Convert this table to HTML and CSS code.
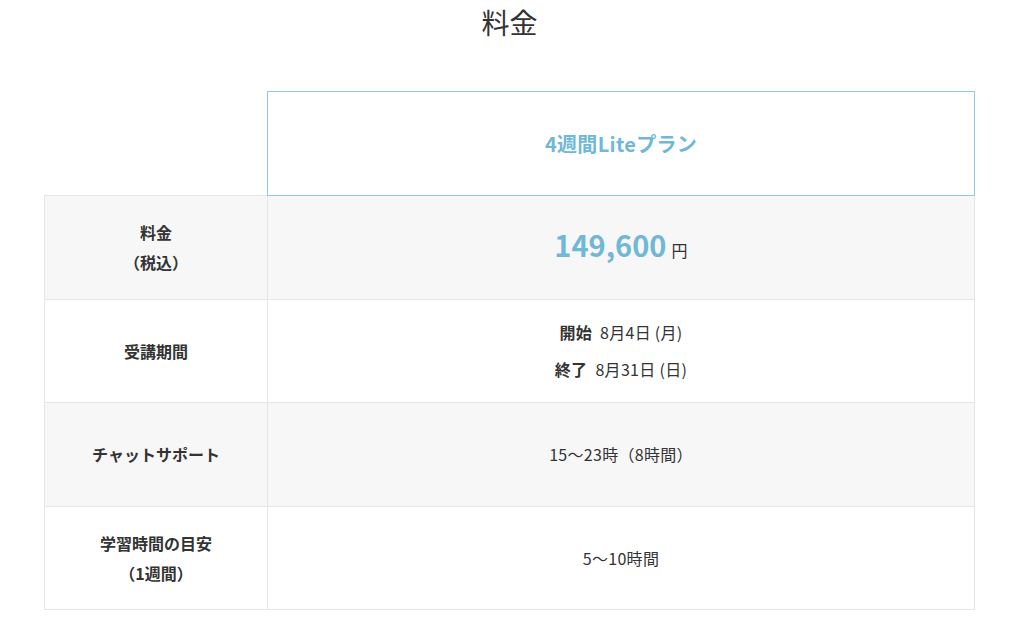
FILE: index.html
```html
<!DOCTYPE html>
<html lang="ja">
<head>
	<meta charset="UTF-8">
	<title>料金</title>
	<link rel="stylesheet" href="styles.css">
</head>
<body>
<div class="price">
	<h2 class="price-title">料金</h2>
	<table class="price-table">
		<colgroup>
			<col class="col-label">
			<col class="col-value">
		</colgroup>
		<tr class="head">
			<th class="blank"></th>
			<th class="plan">4週間Liteプラン</th>
		</tr>
		<tr class="gray">
			<th>料金<br>（税込）</th>
			<td><span class="amount">149,600</span><span class="yen">円</span></td>
		</tr>
		<tr>
			<th>受講期間</th>
			<td>
				<p class="period"><b>開始</b>8月4日 (月)</p>
				<p class="period"><b>終了</b>8月31日 (日)</p>
			</td>
		</tr>
		<tr class="gray">
			<th>チャットサポート</th>
			<td>15〜23時（8時間）</td>
		</tr>
		<tr>
			<th>学習時間の目安<br>（1週間）</th>
			<td>5〜10時間</td>
		</tr>
	</table>
</div>
</body>
</html>
```

FILE: styles.css
```css
* {
    margin: 0;
    padding: 0;
}

body {
    font-family: "Noto Sans CJK JP", "Noto Sans", sans-serif;
    color: #333;
    background-color: #fff;
}

.price {
    width: 931px;
    margin-left: 44px;
    padding-top: 2px;
}

.price-title {
    font-size: 28px;
    font-weight: normal;
    text-align: center;
    line-height: 40px;
    margin-bottom: 49px;
}

.price-table {
    width: 931px;
    border-collapse: collapse;
    table-layout: fixed;
}

.col-label {
    width: 223px;
}

.price-table th,
.price-table td {
    height: 102.5px;
    border: 1px solid #e6e6e6;
    text-align: center;
    vertical-align: middle;
}

/* 左の列 */
.price-table th {
    font-size: 16px;
    font-weight: bold;
    line-height: 30px;
}

.price-table td {
    font-size: 16px;
    letter-spacing: 0.3px;
    line-height: 24px;
}

.price-table .head th {
    height: 103px;
    border: none;
}

.price-table .head .plan {
    border: 1px solid #8fcbdd;
    color: #6fb8d6;
    font-size: 20px;
    letter-spacing: 0.3px;
    font-weight: bold;
}

.price-table .gray th,
.price-table .gray td {
    background-color: #f7f7f7;
}

.amount {
    color: #6fb8d6;
    font-size: 29px;
    font-weight: bold;
    letter-spacing: 0;
    margin-right: 5px;
}

.yen {
    font-size: 16px;
}

.period {
    line-height: 37px;
}

.period b {
    margin-right: 8px;
}
```
